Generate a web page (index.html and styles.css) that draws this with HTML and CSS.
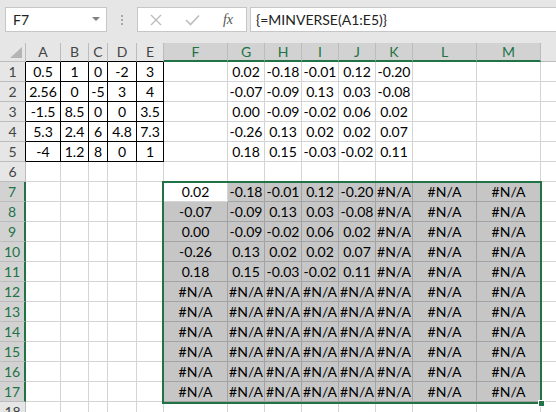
FILE: index.html
```html
<!DOCTYPE html>
<html lang="en">
<head>
    <meta charset="UTF-8">
    <meta name="viewport" content="width=device-width, initial-scale=1.0">
    <title>MINVERSE</title>
    <link rel="stylesheet" href="styles.css">
</head>
<body>
    <div class="formula-bar">
        <div class="name-box">
            <span class="name-text">F7</span>
            <span class="caret"></span>
        </div>
        <div class="grip"><span class="dots"></span></div>
        <div class="fx-buttons">
            <span class="fx-btn">
                <svg width="12" height="12" viewBox="0 0 12 12"><path d="M1 1 L11 11 M11 1 L1 11" stroke="#bdbdbd" stroke-width="1.4" fill="none"/></svg>
            </span>
            <span class="fx-btn">
                <svg width="15" height="12" viewBox="0 0 15 12"><path d="M1 6 L5.5 10.5 L14 1.5" stroke="#bdbdbd" stroke-width="1.6" fill="none"/></svg>
            </span>
            <span class="fx-btn fx-label">fx</span>
        </div>
        <div class="formula-input">{=MINVERSE(A1:E5)}</div>
    </div>
    <div class="sheet" id="sheet">
        <div class="selection"><span class="fill-handle"></span></div>
    </div>
    <script>
        const colNames = ['', 'A', 'B', 'C', 'D', 'E', 'F', 'G', 'H', 'I', 'J', 'K', 'L', 'M', ''];
        const source = [
            ['0.5', '1', '0', '-2', '3'],
            ['2.56', '0', '-5', '3', '4'],
            ['-1.5', '8.5', '0', '0', '3.5'],
            ['5.3', '2.4', '6', '4.8', '7.3'],
            ['-4', '1.2', '8', '0', '1']
        ];
        const inverse = [
            ['0.02', '-0.18', '-0.01', '0.12', '-0.20'],
            ['-0.07', '-0.09', '0.13', '0.03', '-0.08'],
            ['0.00', '-0.09', '-0.02', '0.06', '0.02'],
            ['-0.26', '0.13', '0.02', '0.02', '0.07'],
            ['0.18', '0.15', '-0.03', '-0.02', '0.11']
        ];

        function cellValue(r, c) {
            if (r >= 1 && r <= 5 && c >= 1 && c <= 5) return source[r - 1][c - 1];
            if (r >= 1 && r <= 5 && c >= 7 && c <= 11) return inverse[r - 1][c - 7];
            if (r >= 7 && r <= 17 && c >= 6 && c <= 13) {
                if (r <= 11 && c <= 10) return inverse[r - 7][c - 6];
                return '#N/A';
            }
            return '';
        }

        const sheet = document.getElementById('sheet');
        for (let r = 0; r <= 18; r++) {
            for (let c = 0; c < colNames.length; c++) {
                const cell = document.createElement('div');
                cell.classList.add('cell');
                if (r === 0 && c === 0) {
                    cell.classList.add('corner');
                } else if (r === 0) {
                    cell.classList.add('col-hdr');
                    cell.innerText = colNames[c];
                    if (c >= 6 && c <= 13) cell.classList.add('hdr-sel');
                    if (c >= 1 && c <= 5) cell.classList.add('box-bottom');
                } else if (c === 0) {
                    cell.classList.add('row-hdr');
                    cell.innerText = r;
                    if (r >= 7 && r <= 17) cell.classList.add('hdr-sel');
                    if (r >= 1 && r <= 5) cell.classList.add('box-right');
                } else {
                    cell.innerText = cellValue(r, c);
                    if (r >= 1 && r <= 5 && c >= 1 && c <= 5) cell.classList.add('boxed');
                    if (r >= 7 && r <= 17 && c >= 6 && c <= 13) {
                        cell.classList.add(r === 7 && c === 6 ? 'active' : 'sel');
                    }
                }
                sheet.appendChild(cell);
            }
        }
    </script>
</body>
</html>
```

FILE: styles.css
```css
body {
    margin: 0;
    background-color: #e6e6e6;
    overflow: hidden;
    font-family: Lato, "Liberation Sans", sans-serif;
}

.formula-bar {
    display: flex;
    align-items: flex-start;
    height: 43px;
    padding-top: 7px;
    box-sizing: border-box;
}

.name-box {
    position: relative;
    width: 102px;
    height: 25px;
    margin-left: 5px;
    box-sizing: border-box;
    background-color: #fff;
    border: 1px solid #c6c6c6;
}

.name-text {
    display: block;
    padding-left: 7px;
    line-height: 23px;
    font-size: 14px;
    color: #222;
}

.caret {
    position: absolute;
    right: 6px;
    top: 9px;
    border-left: 4px solid transparent;
    border-right: 4px solid transparent;
    border-top: 4px solid #808080;
}

.grip {
    width: 30px;
    height: 25px;
    display: flex;
    justify-content: center;
    align-items: center;
}

.dots {
    width: 2px;
    height: 2px;
    background-color: #a8a8a8;
    box-shadow: 0 -4px 0 #a8a8a8, 0 4px 0 #a8a8a8;
}

.fx-buttons {
    display: flex;
    width: 110px;
    height: 25px;
    box-sizing: border-box;
    background-color: #fff;
    border: 1px solid #c6c6c6;
}

.fx-btn {
    width: 36px;
    display: flex;
    justify-content: center;
    align-items: center;
}

.fx-label {
    font-family: "Liberation Serif", serif;
    font-style: italic;
    font-size: 14px;
    color: #555;
}

.formula-input {
    flex: 1;
    height: 25px;
    margin-left: 3px;
    margin-right: -2px;
    box-sizing: border-box;
    background-color: #fff;
    border: 1px solid #c6c6c6;
    padding-left: 5px;
    line-height: 23px;
    font-size: 14px;
    color: #222;
}

.sheet {
    position: relative;
    display: grid;
    grid-template-columns: 26px 35px 28px 19px 29px 27px 64px 37px 37px 37px 37px 37px 64px 64px 64px;
    grid-template-rows: 19px repeat(18, 20px);
    background-color: #fff;
}

.cell {
    box-sizing: border-box;
    border-right: 1px solid #d4d4d4;
    border-bottom: 1px solid #d4d4d4;
    font-size: 14px;
    line-height: 20px;
    text-align: center;
    color: #000;
    white-space: nowrap;
    overflow: hidden;
}

.corner,
.col-hdr,
.row-hdr {
    background-color: #e6e6e6;
    border-color: #bcbcbc;
    color: #444;
    line-height: 18px;
}

.row-hdr {
    line-height: 20px;
}

.corner {
    position: relative;
}

.corner::after {
    content: "";
    position: absolute;
    right: 3px;
    bottom: 3px;
    border-left: 12px solid transparent;
    border-bottom: 11px solid #b4b4b4;
}

.hdr-sel {
    background-color: #d2d2d2;
    color: #217346;
}

.col-hdr.hdr-sel {
    border-bottom: 2px solid #217346;
}

.row-hdr.hdr-sel {
    border-right: 2px solid #217346;
}

.box-bottom {
    border-bottom-color: #000;
}

.box-right {
    border-right-color: #000;
}

.boxed {
    border-right-color: #000;
    border-bottom-color: #000;
}

.sel {
    background-color: #c6c6c6;
    border-color: #a3a3a3;
}

.selection {
    position: absolute;
    left: 162px;
    top: 138px;
    width: 380px;
    height: 223px;
    box-sizing: border-box;
    border: 2px solid #217346;
    pointer-events: none;
}

.fill-handle {
    position: absolute;
    right: -5px;
    bottom: -5px;
    width: 5px;
    height: 5px;
    background-color: #217346;
    border: 1px solid #fff;
}
```
